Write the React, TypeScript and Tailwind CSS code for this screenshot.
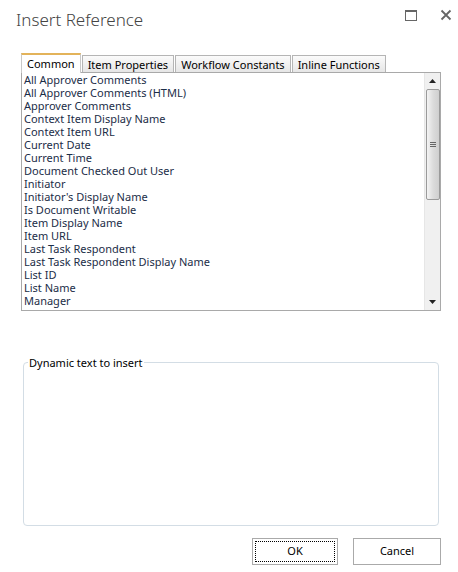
import { useState } from 'react';

const tabs = ['Common', 'Item Properties', 'Workflow Constants', 'Inline Functions'];

const items = [
  'All Approver Comments',
  'All Approver Comments (HTML)',
  'Approver Comments',
  'Context Item Display Name',
  'Context Item URL',
  'Current Date',
  'Current Time',
  'Document Checked Out User',
  'Initiator',
  "Initiator's Display Name",
  'Is Document Writable',
  'Item Display Name',
  'Item URL',
  'Last Task Respondent',
  'Last Task Respondent Display Name',
  'List ID',
  'List Name',
  'Manager',
  "Manager's Display Name",
];

export default function App() {
  const [active, setActive] = useState(0);

  return (
    <div className="w-[458px] h-[572px] bg-white flex flex-col overflow-hidden" style={{ fontFamily: '"Noto Sans", "Open Sans", sans-serif' }}>
      {/* Title bar */}
      <div className="flex items-start h-[53px] pl-[16px] pr-[6px]">
        <h1 className="mt-[9px] text-[17px] leading-[22px] text-[#444] font-light flex-grow">Insert Reference</h1>
        <button className="mt-[10px] w-[12px] h-[11px] border border-[#666] border-t-[2px]" />
        <button className="mt-[9px] ml-[23px] w-[12px] h-[12px] flex items-center justify-center">
          <svg viewBox="0 0 12 12" className="w-[12px] h-[12px]">
            <path d="M1.5 1.5 L10.5 10.5 M10.5 1.5 L1.5 10.5" stroke="#666" strokeWidth="1.8" />
          </svg>
        </button>
      </div>

      {/* Tabs */}
      <div className="flex items-end ml-[21px] h-[19px]">
        {tabs.map((t, i) =>
          i === active ? (
            <button
              key={t}
              onClick={() => setActive(i)}
              className="relative z-10 h-[20px] -mb-[1px] px-[5px] border border-b-0 border-[#c9c9c9] border-t-[#e3b35a] border-t-2 bg-white text-[11px] leading-[16px] text-black mr-[1px]"
            >
              {t}
            </button>
          ) : (
            <button
              key={t}
              onClick={() => setActive(i)}
              className="h-[17px] px-[5px] border border-b-0 border-[#b5b5b5] bg-gradient-to-b from-[#fbfbfb] to-[#e6e6e6] text-[11px] leading-[15px] text-black mr-[1px]"
            >
              {t}
            </button>
          )
        )}
      </div>

      {/* List */}
      <div className="ml-[21px] w-[420px] h-[239px] border border-[#a9a9a9] flex">
        <div className="flex-grow overflow-hidden pl-[2px]">
          {items.map((it) => (
            <div key={it} className="h-[13px] leading-[13px] text-[11px] text-[#1b2d47] whitespace-nowrap">
              {it}
            </div>
          ))}
        </div>
        <div className="w-[16px] bg-[#f0f0f0] flex flex-col items-center border-l border-[#e6e6e6]">
          <div className="h-[16px] w-full flex items-center justify-center">
            <svg viewBox="0 0 7 4" className="w-[7px] h-[4px]"><path d="M3.5 0 L7 4 L0 4 Z" fill="#222" /></svg>
          </div>
          <div className="w-[14px] h-[111px] border border-[#9a9a9a] rounded-[2px] bg-gradient-to-r from-[#f4f4f4] via-[#dcdcdc] to-[#cfcfcf] flex items-center justify-center">
            <div className="flex flex-col gap-[1px]">
              <div className="w-[6px] h-[1px] bg-[#666]" />
              <div className="w-[6px] h-[1px] bg-[#666]" />
              <div className="w-[6px] h-[1px] bg-[#666]" />
            </div>
          </div>
          <div className="flex-grow" />
          <div className="h-[17px] w-full flex items-center justify-center">
            <svg viewBox="0 0 7 4" className="w-[7px] h-[4px]"><path d="M0 0 L7 0 L3.5 4 Z" fill="#222" /></svg>
          </div>
        </div>
      </div>

      {/* Dynamic text */}
      <fieldset className="mt-[45px] ml-[23px] w-[416px] h-[170px] border border-[#d3dde5] rounded-[4px] px-[4px]">
        <legend className="text-[11px] leading-[13px] text-black px-[1px] mt-[2px]">Dynamic text to insert</legend>
      </fieldset>

      {/* Buttons */}
      <div className="flex justify-end gap-[15px] mt-[12px] pr-[17px]">
        <button className="w-[86px] h-[27px] border border-[#aaa] bg-white p-[2px]">
          <span className="flex w-full h-full items-center justify-center border border-dotted border-black text-[11px] text-black">OK</span>
        </button>
        <button className="w-[88px] h-[27px] border border-[#aaa] bg-white text-[11px] text-black">Cancel</button>
      </div>
    </div>
  );
}
